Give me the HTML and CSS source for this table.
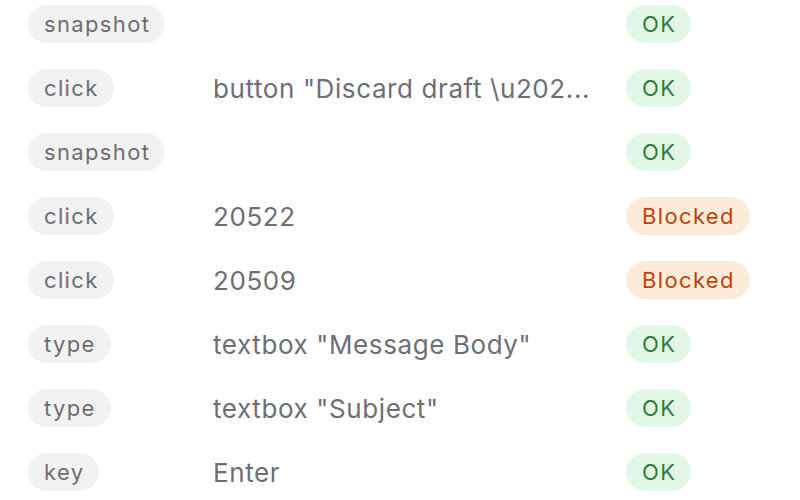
FILE: index.html
```html
<!DOCTYPE html>
<html>
<head>
<meta charset="utf-8">
<link rel="stylesheet" href="styles.css">
</head>
<body>
<div class="log">
  <div class="row"><span class="pill">snapshot</span><span class="detail"></span><span class="status ok">OK</span></div>
  <div class="row"><span class="pill">click</span><span class="detail">button "Discard draft \u202...</span><span class="status ok">OK</span></div>
  <div class="row"><span class="pill">snapshot</span><span class="detail"></span><span class="status ok">OK</span></div>
  <div class="row"><span class="pill">click</span><span class="detail">20522</span><span class="status blocked">Blocked</span></div>
  <div class="row"><span class="pill">click</span><span class="detail">20509</span><span class="status blocked">Blocked</span></div>
  <div class="row"><span class="pill">type</span><span class="detail">textbox "Message Body"</span><span class="status ok">OK</span></div>
  <div class="row"><span class="pill">type</span><span class="detail">textbox "Subject"</span><span class="status ok">OK</span></div>
  <div class="row"><span class="pill">key</span><span class="detail">Enter</span><span class="status ok">OK</span></div>
</div>
</body>
</html>
```
FILE: styles.css
```css
html, body {
  margin: 0;
  padding: 0;
  background: #ffffff;
  font-family: Inter, "Noto Sans", sans-serif;
  overflow: hidden;
}
.log {
  margin-top: -8px;
  display: flex;
  flex-direction: column;
}
.row {
  height: 64px;
  display: grid;
  grid-template-columns: 185px 413px 1fr;
  align-items: center;
  padding-left: 28px;
}
.pill {
  justify-self: start;
  height: 38px;
  line-height: 38px;
  padding: 0 15px 0 16px;
  border-radius: 19px;
  background: #f2f2f3;
  color: #6e6e76;
  font-size: 22px;
  letter-spacing: 1.35px;
}
.detail {
  color: #6e6e76;
  font-size: 26px;
  letter-spacing: 0.6px;
  white-space: nowrap;
  overflow: hidden;
  max-width: 400px;
}
.status {
  justify-self: start;
  height: 38px;
  line-height: 38px;
  padding: 0 15px 0 16px;
  border-radius: 19px;
  font-size: 22px;
  letter-spacing: 1.35px;
}
.ok {
  background: #e2f8e7;
  color: #2e7d32;
}
.blocked {
  background: #fcebd9;
  color: #c2410c;
}
```
